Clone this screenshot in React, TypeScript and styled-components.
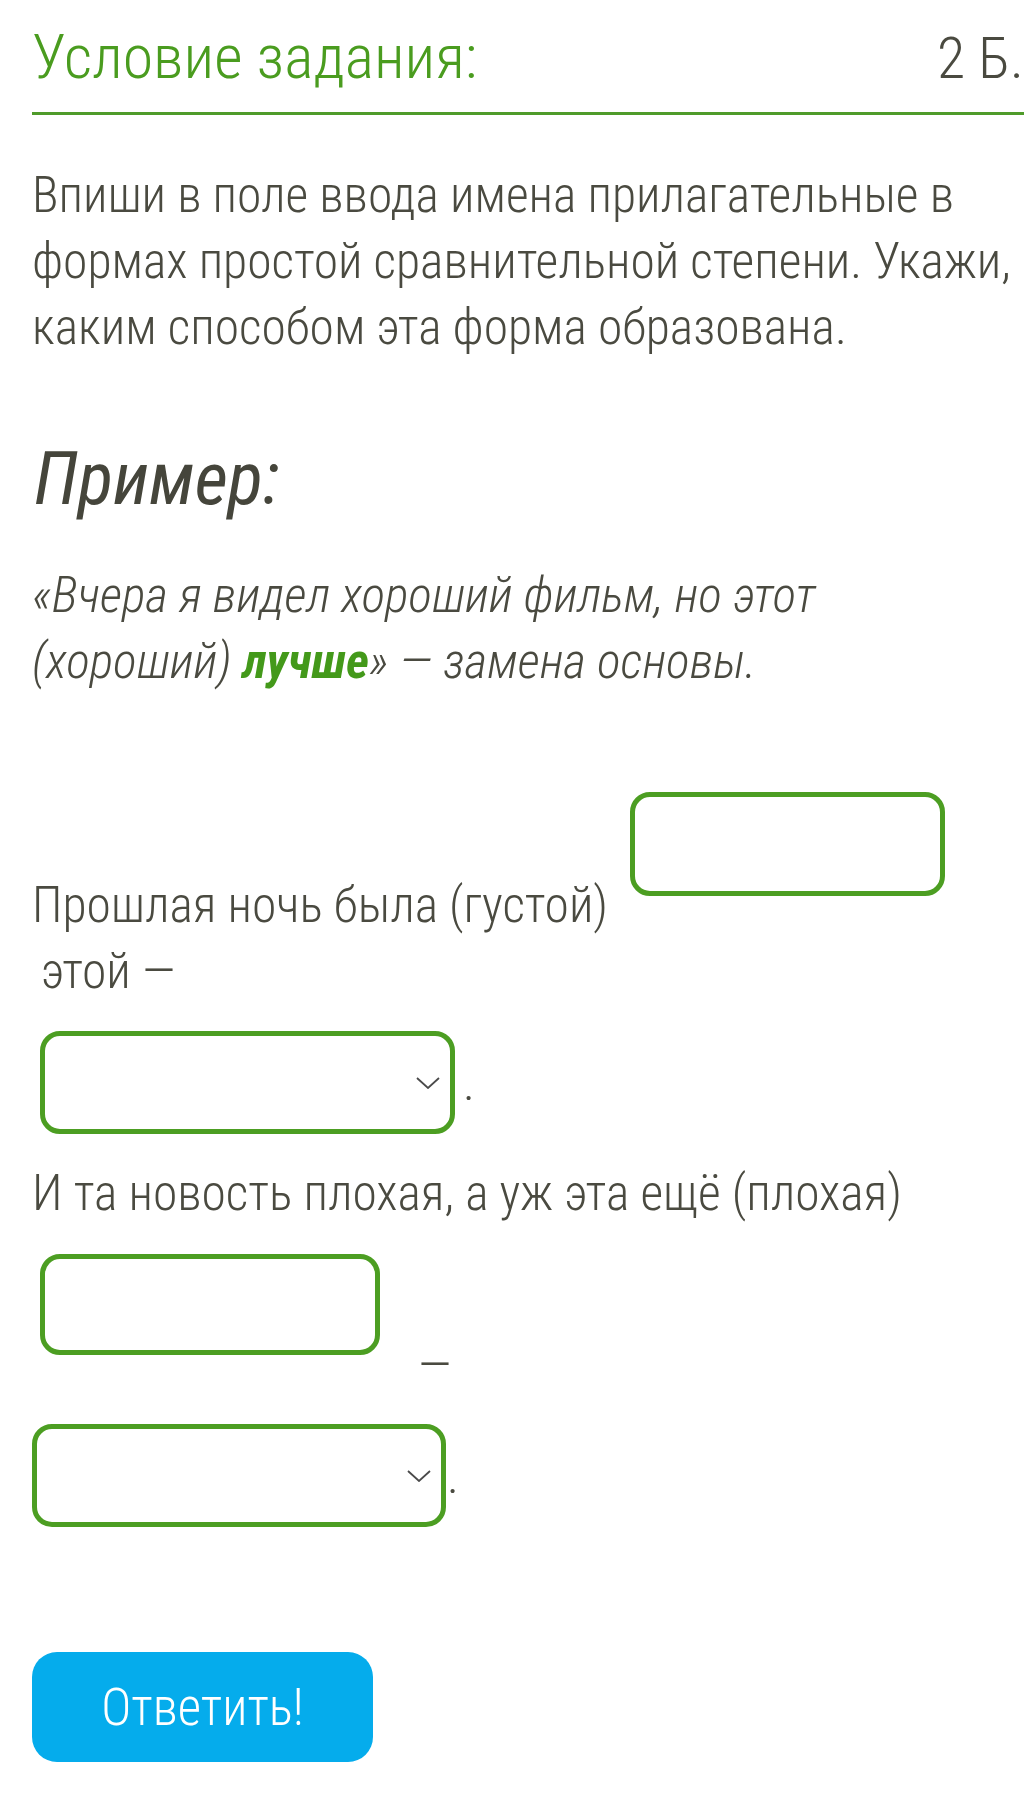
import React from 'react';
import styled, { createGlobalStyle } from 'styled-components';

const GREEN = '#4a9c1f';
const BORDER_GREEN = '#4c9e22';
const TEXT = '#4a4a40';
const FONT = `"Roboto Condensed", "Liberation Sans Narrow", sans-serif`;

const GlobalStyle = createGlobalStyle`
  body {
    margin: 0;
    background: #fff;
    font-family: ${FONT};
    color: ${TEXT};
  }
`;

const Page = styled.main`
  padding: 20px 6px 34px 32px;
`;

const Header = styled.header`
  display: flex;
  justify-content: space-between;
  align-items: baseline;
  padding-bottom: 17px;
  border-bottom: 3px solid #4f9b2a;
  font-size: 62px;
  line-height: 74px;
  font-weight: 300;
`;

const Title = styled.h1`
  margin: 0;
  font: inherit;
  color: ${GREEN};
`;

const Points = styled.span`
  font-size: 58px;
  color: ${TEXT};
`;

const Task = styled.p`
  margin: 47px 0 0;
  font-size: 49.5px;
  line-height: 66px;
  font-weight: 300;
`;

const ExampleTitle = styled.h2`
  margin: 78px 0 0 2px;
  font-size: 73px;
  line-height: 82px;
  font-style: italic;
  font-weight: 400;
  color: #45453b;
`;

const Quote = styled.p`
  margin: 42px 0 0;
  font-size: 49.5px;
  line-height: 66px;
  font-style: italic;
  font-weight: 300;
`;

const Accent = styled.b`
  color: #43991a;
  font-weight: 700;
`;

const Row = styled.div<{ $mt?: number; $indent?: number }>`
  margin-top: ${({ $mt }) => $mt || 0}px;
  padding-left: ${({ $indent }) => $indent || 0}px;
  font-size: 49.5px;
  line-height: 66px;
  font-weight: 300;
`;

const TextInput = styled.input<{ $w: number; $h: number; $mt?: number; $mb: number; $ml: number }>`
  display: inline-block;
  vertical-align: bottom;
  box-sizing: border-box;
  width: ${({ $w }) => $w}px;
  height: ${({ $h }) => $h}px;
  margin: ${({ $mt }) => $mt || 0}px 0 ${({ $mb }) => $mb}px ${({ $ml }) => $ml}px;
  padding: 0 16px;
  border: 5px solid ${BORDER_GREEN};
  border-radius: 20px;
  background: #fff;
  font: inherit;
  color: inherit;
  outline: none;
`;

const SelectWrap = styled.span<{ $mt: number; $mb: number; $ml: number; $mr: number }>`
  position: relative;
  display: inline-block;
  margin: ${({ $mt, $mb, $ml, $mr }) => `${$mt}px ${$mr}px ${$mb}px ${$ml}px`};
`;

const Select = styled.select<{ $w: number }>`
  appearance: none;
  box-sizing: border-box;
  width: ${({ $w }) => $w}px;
  height: 103px;
  padding: 0 50px 0 16px;
  border: 5px solid ${BORDER_GREEN};
  border-radius: 20px;
  background: #fff;
  font: inherit;
  color: inherit;
  outline: none;
`;

const Chevron = styled.svg`
  position: absolute;
  right: 15px;
  top: 50%;
  margin-top: -6px;
  width: 24px;
  height: 12px;
  pointer-events: none;
`;

const Dash = styled.span<{ $ml: number }>`
  margin-left: ${({ $ml }) => $ml}px;
`;

const SubmitButton = styled.button`
  display: block;
  margin-top: 125px;
  width: 341px;
  height: 110px;
  border: none;
  border-radius: 25px;
  background: #05acec;
  color: #fff;
  font-family: ${FONT};
  font-size: 51px;
  font-weight: 300;
  cursor: pointer;
`;

const Dropdown: React.FC<{ w: number; mt: number; mb: number; ml: number; mr: number }> = ({
  w,
  mt,
  mb,
  ml,
  mr,
}) => (
  <SelectWrap $mt={mt} $mb={mb} $ml={ml} $mr={mr}>
    <Select $w={w} defaultValue="">
      <option value=""></option>
      <option value="suffix">суффиксальный</option>
      <option value="stem">замена основы</option>
    </Select>
    <Chevron viewBox="0 0 24 12">
      <path d="M1 1 L12 11 L23 1" fill="none" stroke="#4a4a4a" strokeWidth="1.8" />
    </Chevron>
  </SelectWrap>
);

export default function App() {
  return (
    <>
      <GlobalStyle />
      <Page>
        <Header>
          <Title>Условие задания:</Title>
          <Points>2 Б.</Points>
        </Header>

        <Task>
          Впиши в поле ввода имена прилагательные в
          <br />
          формах простой сравнительной степени. Укажи,
          <br />
          каким способом эта форма образована.
        </Task>

        <ExampleTitle>Пример:</ExampleTitle>

        <Quote>
          «Вчера я видел хороший фильм, но этот
          <br />
          (хороший) <Accent>лучше</Accent>» — замена основы.
        </Quote>

        <Row $mt={98}>
          Прошлая ночь была (густой)
          <TextInput $w={315} $h={104} $mb={42} $ml={22} />
        </Row>
        <Row $indent={9}>этой —</Row>
        <Row>
          <Dropdown w={415} mt={27} mb={26} ml={8} mr={8} />.
        </Row>

        <Row>И та новость плохая, а уж эта ещё (плохая)</Row>
        <Row>
          <TextInput $w={340} $h={101} $mt={28} $mb={43} $ml={8} />
          <Dash $ml={38}>—</Dash>
        </Row>
        <Row>
          <Dropdown w={414} mt={26} mb={0} ml={0} mr={1} />.
        </Row>

        <SubmitButton>Ответить!</SubmitButton>
      </Page>
    </>
  );
}
